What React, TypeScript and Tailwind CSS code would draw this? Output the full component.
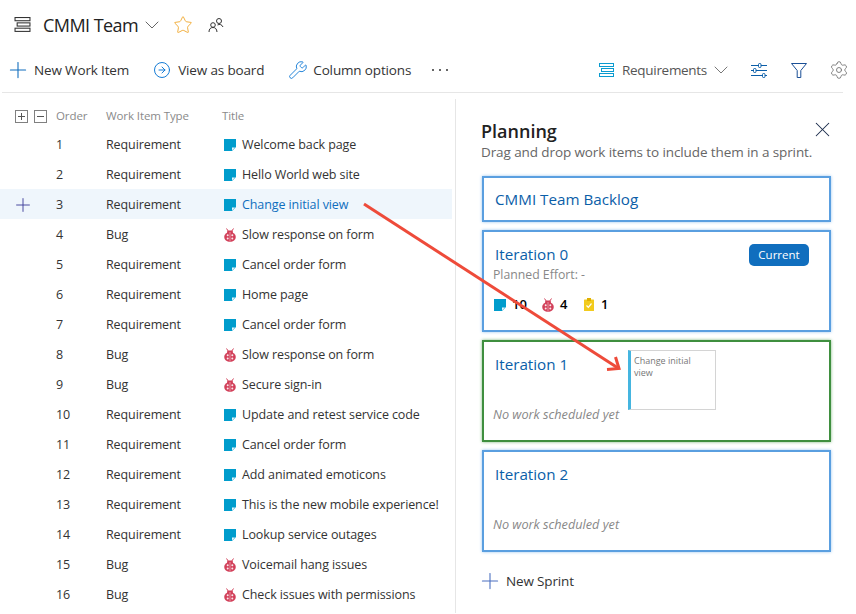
import { Plus, ChevronDown, X, Star, Settings, Wrench, CircleArrowRight } from "lucide-react";

const rows = [
  { order: 1, type: "Requirement", title: "Welcome back page" },
  { order: 2, type: "Requirement", title: "Hello World web site" },
  { order: 3, type: "Requirement", title: "Change initial view" },
  { order: 4, type: "Bug", title: "Slow response on form" },
  { order: 5, type: "Requirement", title: "Cancel order form" },
  { order: 6, type: "Requirement", title: "Home page" },
  { order: 7, type: "Requirement", title: "Cancel order form" },
  { order: 8, type: "Bug", title: "Slow response on form" },
  { order: 9, type: "Bug", title: "Secure sign-in" },
  { order: 10, type: "Requirement", title: "Update and retest service code" },
  { order: 11, type: "Requirement", title: "Cancel order form" },
  { order: 12, type: "Requirement", title: "Add animated emoticons" },
  { order: 13, type: "Requirement", title: "This is the new mobile experience!" },
  { order: 14, type: "Requirement", title: "Lookup service outages" },
  { order: 15, type: "Bug", title: "Voicemail hang issues" },
  { order: 16, type: "Bug", title: "Check issues with permissions" },
];

function ReqIcon() {
  return (
    <svg width="12" height="12" viewBox="0 0 12 12" className="shrink-0">
      <path d="M0 0H12V8L8 12H0Z" fill="#009ccc" />
      <path d="M8 8.5H11L8 11.5Z" fill="#e8f6fb" />
    </svg>
  );
}

function BugIcon() {
  return (
    <svg width="12" height="14" viewBox="0 0 12 14" className="shrink-0">
      <path d="M2.5 0.5L4.5 3.5M9.5 0.5L7.5 3.5" stroke="#d2405a" strokeWidth="1" fill="none" />
      <rect x="3" y="2.5" width="6" height="3" rx="1.5" fill="#d2405a" />
      <ellipse cx="6" cy="9" rx="5.8" ry="5" fill="#d2405a" />
      <path d="M6 4V14" stroke="#f4c6cf" strokeWidth="0.6" />
      <circle cx="3.7" cy="7.2" r="1" fill="#fbe6ea" />
      <circle cx="8.3" cy="7.2" r="1" fill="#fbe6ea" />
      <circle cx="3.7" cy="10.6" r="1" fill="#fbe6ea" />
      <circle cx="8.3" cy="10.6" r="1" fill="#fbe6ea" />
    </svg>
  );
}

function TaskIcon() {
  return (
    <svg width="10" height="13" viewBox="0 0 10 13" className="shrink-0">
      <rect x="0" y="1.5" width="10" height="11.5" rx="0.5" fill="#f2cb1d" />
      <rect x="3" y="0" width="4" height="3" fill="#e0b000" />
      <path d="M2.5 7.5L4.3 9.3L7.5 5.5" stroke="#fff" strokeWidth="1.2" fill="none" />
    </svg>
  );
}

function BacklogIcon({ color, width = 15, height = 15 }: { color: string; width?: number; height?: number }) {
  return (
    <svg width={width} height={height} viewBox="0 0 15 15" fill="none" stroke={color} strokeWidth="1" className="shrink-0">
      <rect x="0.5" y="0.5" width="14" height="3" />
      <rect x="2.5" y="5.5" width="12" height="3" />
      <rect x="0.5" y="10.5" width="14" height="3" />
    </svg>
  );
}

function TeamIcon() {
  return (
    <svg width="16" height="16" viewBox="0 0 16 16" fill="none" stroke="#333" strokeWidth="1">
      <circle cx="11" cy="4" r="2.5" />
      <circle cx="5" cy="8" r="2.3" />
      <path d="M1 15C1 12 2.5 10.5 5 10.5C7.5 10.5 8.7 12 9 15" />
      <path d="M9.5 8C11.5 6.8 14 7.5 15 10" />
    </svg>
  );
}

function SlidersIcon() {
  return (
    <svg width="16" height="15" viewBox="0 0 16 15" fill="none" stroke="#0b5ea8" strokeWidth="1" className="shrink-0">
      <path d="M0 2.5H7M10 2.5H16M0 7.5H2M5 7.5H16M0 12.5H11M14 12.5H16" />
      <rect x="7.5" y="0.5" width="2.5" height="4" rx="1" />
      <rect x="2.5" y="5.5" width="2.5" height="4" rx="1" />
      <rect x="11.5" y="10.5" width="2.5" height="4" rx="1" />
    </svg>
  );
}

function FunnelIcon() {
  return (
    <svg width="16" height="15" viewBox="0 0 16 15" fill="none" stroke="#1a4f96" strokeWidth="1" className="shrink-0">
      <path d="M0.5 0.5H15.5L9.8 7.5V14.5H6.2V7.5Z" />
    </svg>
  );
}

function BoxIcon({ minus }: { minus?: boolean }) {
  return (
    <div className="relative w-[13px] h-[13px] border border-[#808080]">
      <div className="absolute left-[2px] right-[2px] top-[5px] h-px bg-[#555]" />
      {!minus && <div className="absolute top-[2px] bottom-[2px] left-[5px] w-px bg-[#555]" />}
    </div>
  );
}

function SprintCard({ children, green, tall = true }: { children: React.ReactNode; green?: boolean; tall?: boolean }) {
  return (
    <div
      className={`relative bg-white border-2 ${green ? "border-[#3f8f3f] shadow-[0_0_3px_#7fb87f]" : "border-[#5a9fe0] shadow-[0_0_3px_#9cc6ee]"} ${tall ? "h-[102px]" : "h-[46px]"} pl-[11px] pr-5`}
    >
      {children}
    </div>
  );
}

export default function App() {
  return (
    <div className="relative w-[856px] h-[614px] overflow-hidden bg-white text-[#333] font-['Open_Sans',sans-serif]">
      {/* Title */}
      <div className="flex items-center h-[50px] pl-[14px]">
        <BacklogIcon color="#333" width={17} height={16} />
        <span className="ml-[12px] text-[18px] tracking-[-0.55px] text-[#222]">CMMI Team</span>
        <ChevronDown size={24} strokeWidth={1} className="ml-[2px] text-[#666]" />
        <Star size={20} strokeWidth={1.1} className="ml-[9px] text-[#f0a830]" />
        <div className="ml-[15px]">
          <TeamIcon />
        </div>
      </div>

      {/* Toolbar */}
      <div className="flex items-center h-[43px] ml-[2px] w-[841px] pl-[3px] pb-[2px] border-b border-[#e6e6e6] text-[13.5px] tracking-[-0.15px]">
        <Plus size={26} strokeWidth={1} className="text-[#0f6cbd]" />
        <span className="ml-[3px]">New Work Item</span>
        <CircleArrowRight size={18} strokeWidth={1.3} className="ml-[24px] text-[#0f78d4]" />
        <span className="ml-[7px]">View as board</span>
        <Wrench size={20} strokeWidth={1.1} className="ml-[24px] text-[#0f78d4]" />
        <span className="ml-[5px]">Column options</span>
        <span className="ml-[21px] flex gap-[5px]">
          <i className="w-[2px] h-[2px] rounded-full bg-[#333]" />
          <i className="w-[2px] h-[2px] rounded-full bg-[#333]" />
          <i className="w-[2px] h-[2px] rounded-full bg-[#333]" />
        </span>
        <div className="ml-auto flex items-center">
          <BacklogIcon color="#0a9bd0" />
          <span className="ml-[8px] tracking-[-0.3px] text-[#555]">Requirements</span>
          <ChevronDown size={24} strokeWidth={1} className="ml-[2px] text-[#777]" />
          <div className="ml-[18px]">
            <SlidersIcon />
          </div>
          <div className="ml-[24px]">
            <FunnelIcon />
          </div>
          <Settings size={20} strokeWidth={1.1} className="ml-[22px] -mr-[6px] text-[#777]" />
        </div>
      </div>

      <div className="flex h-[520px]">
        {/* Backlog list */}
        <div className="w-[452px] shrink-0 pt-[13px] text-[12.5px] tracking-[-0.1px]">
          <div className="flex items-center h-[20px] text-[#8a8a8a] text-[11.5px]">
            <div className="flex w-[56px] pl-[15px] gap-[6px]">
              <BoxIcon />
              <BoxIcon minus />
            </div>
            <div className="w-[50px]">Order</div>
            <div className="w-[116px]">Work Item Type</div>
            <div>Title</div>
          </div>
          <div className="mt-[3px]">
            {rows.map((row) => {
              const selected = row.order === 3;
              return (
                <div key={row.order} className={`flex items-center h-[30px] pt-[2px] ${selected ? "bg-[#eff6fc]" : ""}`}>
                  <div className="w-[56px] pl-[12px]">
                    {selected && <Plus size={22} strokeWidth={1} className="text-[#3b3b98]" />}
                  </div>
                  <div className="w-[50px]">{row.order}</div>
                  <div className="w-[118px]">{row.type}</div>
                  <div className="flex items-center gap-[6px] whitespace-nowrap">
                    {row.type === "Bug" ? <BugIcon /> : <ReqIcon />}
                    <span className={selected ? "text-[#106ebe]" : ""}>{row.title}</span>
                  </div>
                </div>
              );
            })}
          </div>
        </div>

        {/* Planning panel */}
        <div className="ml-[3px] mt-[6px] w-[376px] border-l border-[#e6e6e6] pl-[26px]">
          <div className="relative pt-[20px] -ml-px">
            <h2 className="text-[18px] leading-[24px] font-semibold text-[#222]">Planning</h2>
            <p className="text-[13.5px] leading-[18px] tracking-[-0.1px] text-[#666] whitespace-nowrap">
              Drag and drop work items to include them in a sprint.
            </p>
            <X size={25} strokeWidth={1} className="absolute right-[-4px] top-[18px] text-[#1a2a4a]" />
          </div>
          <div className="mt-[15px] flex flex-col gap-[8px] w-[349px]">
            <SprintCard tall={false}>
              <div className="leading-[42px] text-[15.2px] text-[#0b5ea8]">CMMI Team Backlog</div>
            </SprintCard>
            <SprintCard>
              <div className="pt-[11px] text-[15.2px] leading-[22px] text-[#0b5ea8]">Iteration 0</div>
              <div className="-ml-[2px] mt-[1px] text-[12.25px] leading-[18px] text-[#888]">Planned Effort: -</div>
              <div className="-ml-[1px] mt-[11px] flex items-center text-[13px] font-semibold text-black">
                <ReqIcon />
                <span className="ml-[6px] w-[30px]">10</span>
                <BugIcon />
                <span className="ml-[6px] w-[24px]">4</span>
                <TaskIcon />
                <span className="ml-[7px]">1</span>
              </div>
              <div className="absolute right-[20px] top-[12px] w-[60px] h-[22px] rounded-[5px] bg-[#106ebe] text-white text-[11.5px] leading-[22px] text-center">
                Current
              </div>
            </SprintCard>
            <SprintCard green>
              <div className="pt-[11px] text-[15.2px] leading-[22px] text-[#0b5ea8]">Iteration 1</div>
              <div className="-ml-[2px] mt-[30px] text-[12.7px] leading-[18px] italic text-[#888] whitespace-nowrap">No work scheduled yet</div>
              <div className="absolute left-[144px] top-[8px] w-[88px] h-[60px] border border-[#d4d4d4] border-l-[3px] border-l-[#45b5e0] pl-[3px] pr-[20px] pt-[4px] text-[9px] leading-[12px] text-[#777]">
                Change initial view
              </div>
            </SprintCard>
            <SprintCard>
              <div className="pt-[11px] text-[15.2px] leading-[22px] text-[#0b5ea8]">Iteration 2</div>
              <div className="-ml-[2px] mt-[30px] text-[12.7px] leading-[18px] italic text-[#888] whitespace-nowrap">No work scheduled yet</div>
            </SprintCard>
          </div>
          <div className="mt-[16px] -ml-[5px] flex items-center text-[13.5px] tracking-[-0.15px]">
            <Plus size={26} strokeWidth={1} className="text-[#4a6fc0]" />
            <span className="ml-[3px]">New Sprint</span>
          </div>
        </div>
      </div>

      {/* Annotation arrow */}
      <svg className="absolute left-0 top-0 pointer-events-none" width="856" height="614" fill="none">
        <path d="M364 204L618 368" stroke="#ee4b3a" strokeWidth="3" />
        <path d="M607 369.5L619 368.5L615.5 357" stroke="#ee4b3a" strokeWidth="3" />
      </svg>
    </div>
  );
}
